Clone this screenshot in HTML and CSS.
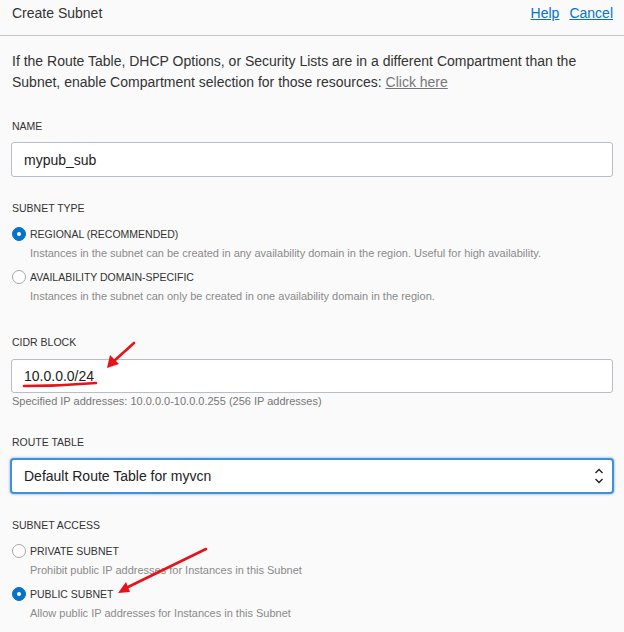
FILE: index.html
```html
<!DOCTYPE html>
<html>
<head>
<meta charset="utf-8">
<link rel="stylesheet" href="styles.css">
</head>
<body>
<div class="page">
  <header class="header">
    <div class="title">Create Subnet</div>
    <div class="links"><a href="#">Help</a><a href="#">Cancel</a></div>
  </header>
  <main class="content">
    <p class="intro">If the Route Table, DHCP Options, or Security Lists are in a different Compartment than the Subnet, enable Compartment selection for those resources: <a class="muted-link" href="#">Click here</a></p>

    <div class="field f-name">
      <div class="label">NAME</div>
      <div class="input">mypub_sub</div>
    </div>

    <div class="field f-type">
      <div class="label">SUBNET TYPE</div>
      <div class="radios">
        <div class="radio-row"><span class="radio on"></span><span class="rlabel">REGIONAL (RECOMMENDED)</span></div>
        <div class="desc">Instances in the subnet can be created in any availability domain in the region. Useful for high availability.</div>
        <div class="radio-row"><span class="radio"></span><span class="rlabel">AVAILABILITY DOMAIN-SPECIFIC</span></div>
        <div class="desc">Instances in the subnet can only be created in one availability domain in the region.</div>
      </div>
    </div>

    <div class="field f-cidr">
      <div class="label">CIDR BLOCK</div>
      <div class="input">10.0.0.0/24</div>
      <div class="helper">Specified IP addresses: 10.0.0.0-10.0.0.255 (256 IP addresses)</div>
    </div>

    <div class="field f-route">
      <div class="label">ROUTE TABLE</div>
      <div class="select">
        <span>Default Route Table for myvcn</span>
        <svg class="chev" width="10" height="18" viewBox="0 0 10 18"><path d="M1.5 6 L5 2.5 L8.5 6" fill="none" stroke="#222" stroke-width="1.4"/><path d="M1.5 12 L5 15.5 L8.5 12" fill="none" stroke="#222" stroke-width="1.4"/></svg>
      </div>
    </div>

    <div class="field f-access">
      <div class="label">SUBNET ACCESS</div>
      <div class="radios">
        <div class="radio-row"><span class="radio"></span><span class="rlabel">PRIVATE SUBNET</span></div>
        <div class="desc">Prohibit public IP addresses for Instances in this Subnet</div>
        <div class="radio-row"><span class="radio on"></span><span class="rlabel">PUBLIC SUBNET</span></div>
        <div class="desc">Allow public IP addresses for Instances in this Subnet</div>
      </div>
    </div>
  </main>
  <svg class="annot" width="624" height="632" viewBox="0 0 624 632">
    <g stroke="#e8121a" stroke-width="2.6" fill="none" stroke-linecap="round">
      <path d="M134 343 L114 361"/>
      <path d="M24 386 Q60 386 96 383"/>
      <path d="M206 549 L126 588"/>
    </g>
    <g fill="#e8121a">
      <path d="M107 368 L110 355 L119 364 Z"/>
      <path d="M118 593 L126 582 L130 592 Z"/>
    </g>
  </svg>
</div>
</body>
</html>
```
FILE: styles.css
```css
* { box-sizing: border-box; }
html, body { margin: 0; padding: 0; }
body {
  background: #fafafa;
  font-family: "Liberation Sans", Arial, sans-serif;
  color: #333;
}
.page { position: relative; width: 624px; height: 632px; overflow: hidden; }
.header {
  height: 36px;
  border-bottom: 1px solid #c6c6c6;
  display: flex;
  justify-content: space-between;
  align-items: flex-start;
  padding: 4px 11px 0 12px;
  font-size: 14px;
  line-height: 18px;
}
.title { color: #333; }
.links { display: flex; gap: 10px; }
.links a { color: #0572ce; text-decoration: underline; }
.content { padding: 0 11px 0 12px; }
.intro {
  margin: 15px 0 0;
  font-size: 14px;
  line-height: 21px;
  color: #333;
}
.muted-link { color: #777; text-decoration: underline; }
.label {
  font-size: 10.5px;
  line-height: 14px;
  color: #333;
}
.field { display: flex; flex-direction: column; }
.f-name { margin-top: 26px; }
.f-type { margin-top: 24px; }
.f-cidr { margin-top: 30px; }
.f-route { margin-top: 27px; }
.f-access { margin-top: 24px; }
.input {
  margin-top: 9px;
  height: 35px;
  margin-left: -1px;
  background: #fff;
  border: 1px solid #b8bec8;
  border-radius: 3px;
  padding: 0 12px;
  display: flex;
  align-items: center;
  font-size: 14px;
  color: #222;
}
.f-cidr .input { margin-top: 10px; height: 34px; }
.helper { font-size: 11px; line-height: 14px; color: #777; margin-top: 1px; }
.select {
  margin-top: 9px;
  height: 36px;
  margin-left: -2px;
  margin-right: -1px;
  background: #fff;
  border: 2px solid #3f8ee0;
  border-radius: 4px;
  box-shadow: 0 0 2px 1px rgba(63,142,224,0.35);
  padding: 0 8px 0 12px;
  display: flex;
  align-items: center;
  justify-content: space-between;
  font-size: 14px;
  color: #222;
}
.chev { display: block; }
.radios { margin-top: 9px; display: flex; flex-direction: column; }
.radio-row {
  display: flex;
  align-items: center;
  height: 20px;
  gap: 4px;
}
.desc + .radio-row { margin-top: 5px; }
.radio {
  width: 14px;
  height: 14px;
  border-radius: 50%;
  border: 1px solid #a8a8a8;
  background: #fff;
  flex: none;
  position: relative;
}
.radio.on { background: #0572ce; border-color: #0572ce; }
.radio.on::after {
  content: "";
  position: absolute;
  left: 4px; top: 4px;
  width: 4px; height: 4px;
  border-radius: 50%;
  background: #fff;
}
.rlabel { font-size: 10.5px; color: #333; line-height: 14px; }
.desc {
  padding-left: 18px;
  font-size: 11px;
  line-height: 18px;
  color: #8a8a8a;
}
.annot { position: absolute; left: 0; top: 0; pointer-events: none; }
```
